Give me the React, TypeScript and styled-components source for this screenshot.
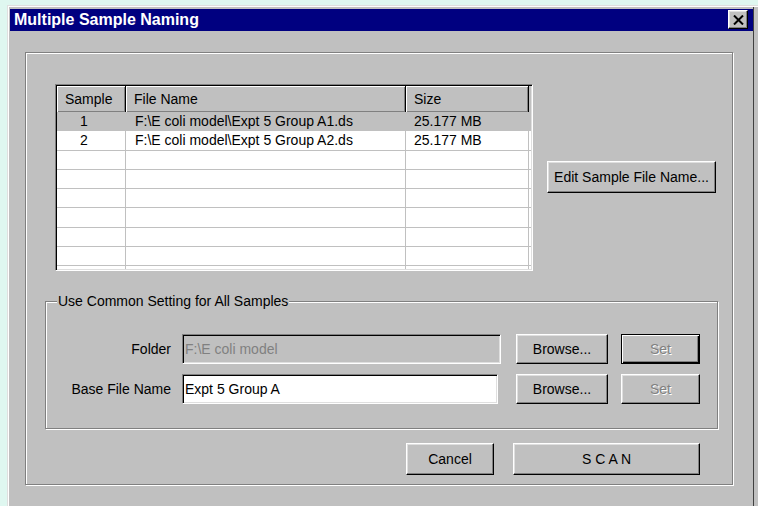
import React from 'react';
import styled, { createGlobalStyle, css } from 'styled-components';

const GlobalStyle = createGlobalStyle`
  html, body {
    margin: 0;
    padding: 0;
    background: #dff7f0;
    overflow: hidden;
  }
  body {
    font-family: "Liberation Sans", Arial, sans-serif;
    font-size: 14px;
    color: #000;
  }
`;

// Win95-style bevels
const raised = css`
  border: 1px solid;
  border-color: #fff #000 #000 #fff;
  box-shadow: inset -1px -1px 0 #808080, inset 1px 1px 0 #dfdfdf;
`;

const sunken = css`
  border: 1px solid;
  border-color: #808080 #fff #fff #808080;
  box-shadow: inset 1px 1px 0 #000, inset -1px -1px 0 #dfdfdf;
`;

const etched = css`
  border: 1px solid #808080;
  box-shadow: inset 1px 1px 0 #fff, 1px 1px 0 #fff;
`;

const Window = styled.div`
  box-sizing: border-box;
  margin: 5px 0 0 7px;
  width: 751px;
  height: 520px;
  padding: 4px 0 0 3px;
  background: #c0c0c0;
  box-shadow: inset 1px 1px 0 #dfdfdf, inset 2px 2px 0 #fff, inset -4px 0 0 #c0c0c0,
    inset -5px 0 0 #404040;
`;

const TitleBar = styled.div`
  box-sizing: border-box;
  width: 743px;
  height: 22px;
  padding: 1px 5px 0 4px;
  background: #000080;
  display: flex;
  align-items: flex-start;
  justify-content: space-between;
`;

const TitleText = styled.span`
  color: #fff;
  font-weight: bold;
  font-size: 16px;
  line-height: 20px;
`;

const CloseButton = styled.button`
  ${raised};
  box-sizing: border-box;
  width: 20px;
  height: 19px;
  padding: 0;
  background: #c0c0c0;
  display: flex;
  align-items: center;
  justify-content: center;
`;

const Panel = styled.div`
  ${etched};
  box-sizing: border-box;
  margin: 21px 0 0 15px;
  width: 708px;
  height: 433px;
  padding: 31px 0 0 19px;
  display: flex;
  flex-direction: column;
`;

const TopRow = styled.div`
  display: flex;
  align-items: flex-start;
  padding-left: 10px;
`;

const ListView = styled.div`
  ${sunken};
  box-sizing: border-box;
  width: 478px;
  height: 187px;
  padding: 1px;
  background: #fff;
  display: flex;
  flex-direction: column;
  overflow: hidden;
`;

const columns = '69px 280px 123px 2px';

const HeaderRow = styled.div`
  display: grid;
  grid-template-columns: ${columns};
  height: 26px;
  flex: none;
  background: #c0c0c0;
`;

const HeaderCell = styled.div`
  box-sizing: border-box;
  height: 26px;
  line-height: 26px;
  padding-left: 8px;
  border-right: 1px solid #000;
  box-shadow: inset 1px 1px 0 #fff, inset -1px -1px 0 #808080;
  white-space: nowrap;
`;

const Filler = styled.div`
  background: #c0c0c0;
`;

const Body = styled.div`
  flex: 1;
  overflow: hidden;
`;

const Row = styled.div<{ $selected?: boolean }>`
  box-sizing: border-box;
  display: grid;
  grid-template-columns: ${columns};
  height: 19.25px;
  border-bottom: 1px solid #c0c0c0;
  background: ${(p) => (p.$selected ? '#c0c0c0' : '#fff')};
`;

const Cell = styled.div<{ $pad?: number }>`
  box-sizing: border-box;
  border-right: 1px solid #c0c0c0;
  padding-left: ${(p) => p.$pad ?? 9}px;
  line-height: 18px;
  white-space: nowrap;
  overflow: hidden;
`;

const Button = styled.button<{ $w: number; $h: number; $default?: boolean }>`
  ${raised};
  box-sizing: border-box;
  width: ${(p) => p.$w}px;
  height: ${(p) => p.$h}px;
  padding: 0;
  background: #c0c0c0;
  font-family: "Liberation Sans", Arial, sans-serif;
  font-size: 14px;
  color: #000;
  flex: none;
  ${(p) =>
    p.$default &&
    css`
      border: 1px solid #000;
      box-shadow: inset 1px 1px 0 #fff, inset -1px -1px 0 #000, inset -2px -2px 0 #808080;
    `}
  &:disabled {
    color: #808080;
    text-shadow: 1px 1px 0 #fff;
  }
`;

const EditButton = styled(Button)`
  margin: 77px 0 0 14px;
`;

const GroupBox = styled.fieldset`
  ${etched};
  box-sizing: border-box;
  width: 673px;
  margin: 22px 0 0 0;
  padding: 25px 0 24px 0;
  min-width: 0;
  display: flex;
  flex-direction: column;
  gap: 10px;
`;

const Legend = styled.legend`
  margin-left: 11px;
  padding: 0 1px;
  line-height: 16px;
  background: #c0c0c0;
  position: relative;
`;

const FieldRow = styled.div`
  display: flex;
  align-items: center;
  height: 30px;
`;

const FieldLabel = styled.label`
  width: 125px;
  margin-right: 11px;
  text-align: right;
  white-space: nowrap;
`;

const InputCell = styled.div`
  width: 334px;
  flex: none;
`;

const TextInput = styled.input<{ $w: number }>`
  ${sunken};
  box-sizing: border-box;
  width: ${(p) => p.$w}px;
  height: 30px;
  padding: 0 0 0 2px;
  margin: 0;
  outline: none;
  background: #fff;
  color: #000;
  font-family: "Liberation Sans", Arial, sans-serif;
  font-size: 14px;
  &:disabled {
    background: #c0c0c0;
    color: #808080;
  }
`;

const SetButton = styled(Button)`
  margin-left: 13px;
`;

const ActionRow = styled.div`
  display: flex;
  justify-content: flex-end;
  gap: 19px;
  margin-top: 14px;
  padding-right: 32px;
`;

const samples = [
  { id: 1, file: 'F:\\E coli model\\Expt 5 Group A1.ds', size: '25.177 MB' },
  { id: 2, file: 'F:\\E coli model\\Expt 5 Group A2.ds', size: '25.177 MB' },
];

const EMPTY_ROWS = 7;

function CloseIcon() {
  return (
    <svg width="11" height="10" viewBox="0 0 11 10">
      <path d="M1 0.5 L10 9.5 M10 0.5 L1 9.5" stroke="#000" strokeWidth="2" fill="none" />
    </svg>
  );
}

export default function App(): JSX.Element {
  return (
    <>
      <GlobalStyle />
      <Window>
        <TitleBar>
          <TitleText>Multiple Sample Naming</TitleText>
          <CloseButton aria-label="Close">
            <CloseIcon />
          </CloseButton>
        </TitleBar>
        <Panel>
          <TopRow>
            <ListView>
              <HeaderRow>
                <HeaderCell>Sample</HeaderCell>
                <HeaderCell>File Name</HeaderCell>
                <HeaderCell>Size</HeaderCell>
                <Filler />
              </HeaderRow>
              <Body>
                {samples.map((s, i) => (
                  <Row key={s.id} $selected={i === 0}>
                    <Cell $pad={23}>{s.id}</Cell>
                    <Cell>{s.file}</Cell>
                    <Cell $pad={8}>{s.size}</Cell>
                    <div />
                  </Row>
                ))}
                {Array.from({ length: EMPTY_ROWS }, (_, i) => (
                  <Row key={`empty-${i}`}>
                    <Cell />
                    <Cell />
                    <Cell />
                    <div />
                  </Row>
                ))}
              </Body>
            </ListView>
            <EditButton $w={169} $h={32}>
              Edit Sample File Name...
            </EditButton>
          </TopRow>

          <GroupBox>
            <Legend>Use Common Setting for All Samples</Legend>
            <FieldRow>
              <FieldLabel>Folder</FieldLabel>
              <InputCell>
                <TextInput $w={319} value="F:\E coli model" disabled readOnly />
              </InputCell>
              <Button $w={92} $h={30}>
                Browse...
              </Button>
              <SetButton $w={79} $h={30} $default disabled>
                Set
              </SetButton>
            </FieldRow>
            <FieldRow>
              <FieldLabel>Base File Name</FieldLabel>
              <InputCell>
                <TextInput $w={316} value="Expt 5 Group A" readOnly />
              </InputCell>
              <Button $w={92} $h={30}>
                Browse...
              </Button>
              <SetButton $w={79} $h={30} disabled>
                Set
              </SetButton>
            </FieldRow>
          </GroupBox>

          <ActionRow>
            <Button $w={88} $h={32}>
              Cancel
            </Button>
            <Button $w={187} $h={32}>
              S C A N
            </Button>
          </ActionRow>
        </Panel>
      </Window>
    </>
  );
}
